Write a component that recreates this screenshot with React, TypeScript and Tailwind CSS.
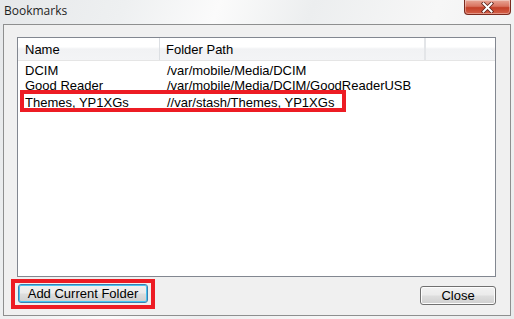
import React from "react";

const rows = [
  { name: "DCIM", path: "/var/mobile/Media/DCIM" },
  { name: "Good Reader", path: "/var/mobile/Media/DCIM/GoodReaderUSB" },
];

export default function App() {
  return (
    <div
      className="relative w-[514px] h-[319px] overflow-hidden bg-[linear-gradient(110deg,#e6e8ea_0%,#eef0f1_20%,#fbfbfb_35%,#eceeef_50%,#f7f7f7_70%,#e9ebec_100%)] text-black"
      style={{ fontFamily: '"Liberation Sans", Arial, sans-serif' }}
    >
      {/* title bar */}
      <div className="flex h-[24px] items-start justify-between">
        <div className="pl-[4px] pt-[3px] text-[12px] leading-[15px] text-[#1e1e1e]" style={{ fontFamily: '"Open Sans", "Liberation Sans", sans-serif' }}>
          Bookmarks
        </div>
        <div className="mr-[3px] flex h-[15px] w-[47px] items-center justify-center rounded-b-[4px] border border-t-0 border-[#7a2a1e] bg-[linear-gradient(180deg,#e8a797_0%,#d9735f_45%,#c33f27_55%,#d5614a_100%)] shadow-[inset_0_0_0_1px_rgba(255,255,255,0.35)]">
          <svg width="13" height="11" viewBox="0 0 13 11">
            <path d="M2.5 1.5 L10.5 9.5 M10.5 1.5 L2.5 9.5" stroke="#5a2018" strokeWidth="3.6" strokeLinecap="square" />
            <path d="M2.5 1.5 L10.5 9.5 M10.5 1.5 L2.5 9.5" stroke="#ffffff" strokeWidth="2" strokeLinecap="square" />
          </svg>
        </div>
      </div>

      {/* frame */}
      <div className="mx-[3px] h-[292px] border border-[#8e8f8f] bg-[#f0f0f0] pl-[13px] pr-[14px] pt-[12px]">
        {/* list */}
        <div className="relative h-[240px] border border-[#828790] bg-white text-[13px] leading-[15px]">
          <div className="flex h-[23px] border-b border-[#e5e5e5] bg-[linear-gradient(180deg,#ffffff_0%,#ffffff_40%,#f1f2f4_50%,#f3f4f6_100%)]">
            <div className="flex w-[142px] items-center border-r border-[#dcdfe3] pl-[7px] pt-[1px]">Name</div>
            <div className="flex w-[266px] items-center border-r-2 border-[#e3e5e8] pl-[6px] pt-[1px]">Folder Path</div>
            <div className="flex-1" />
          </div>
          <div className="pt-[2px]">
            {rows.map((r) => (
              <div key={r.name} className="flex h-[15px]">
                <div className="w-[143px] pl-[7px]">{r.name}</div>
                <div className="pl-[6px]">{r.path}</div>
              </div>
            ))}
            <div className="mt-[2px] flex h-[15px]">
              <div className="w-[143px] pl-[7px]">Themes, YP1XGs</div>
              <div className="pl-[6px]">//var/stash/Themes, YP1XGs</div>
            </div>
          </div>
          {/* annotation box */}
          <div className="pointer-events-none absolute left-[2px] top-[52px] h-[22px] w-[326px] border-4 border-[#ed1c24]" />
        </div>

        {/* buttons */}
        <div className="mt-[2px] flex items-start justify-between">
          <div className="ml-[-6px] border-4 border-[#ed1c24] px-[3px] pt-[1px] pb-[2px]">
            <button className="flex h-[19px] w-[130px] items-center justify-center rounded-[3px] border border-[#3c7fb1] bg-[linear-gradient(180deg,#f2f2f2_0%,#ebebeb_45%,#dddddd_55%,#cfcfcf_100%)] text-[13px] leading-[15px] shadow-[inset_0_0_0_1px_#48c4f0]">
              Add Current Folder
            </button>
          </div>
          <button className="mt-[7px] flex h-[19px] w-[76px] items-center justify-center rounded-[3px] border border-[#707070] bg-[linear-gradient(180deg,#f2f2f2_0%,#ebebeb_45%,#dddddd_55%,#cfcfcf_100%)] text-[13px] leading-[15px] shadow-[inset_0_0_0_1px_#fcfcfc]">
            Close
          </button>
        </div>
      </div>
    </div>
  );
}
